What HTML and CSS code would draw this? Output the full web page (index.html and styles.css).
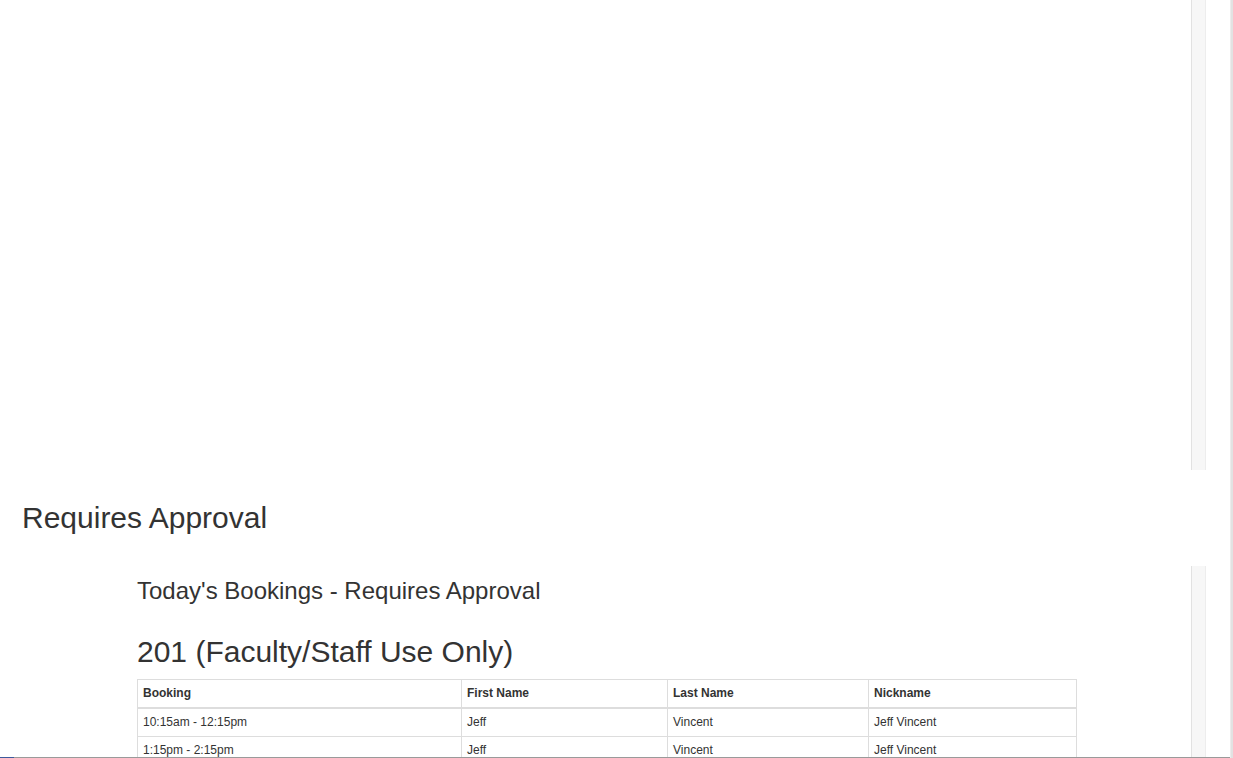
FILE: index.html
```html
<!DOCTYPE html>
<html>
<head>
<meta charset="utf-8">
<link rel="stylesheet" href="styles.css">
</head>
<body>
<div class="page">
  <div class="main">
    <div class="frame frame-top">
      <div class="frame-body"></div>
      <div class="track"></div>
    </div>
    <div class="section-head">
      <h2 class="section-title">Requires Approval</h2>
    </div>
    <div class="frame frame-bottom">
      <div class="frame-body content">
        <h3 class="sub-title">Today's Bookings - Requires Approval</h3>
        <h2 class="room-title">201 (Faculty/Staff Use Only)</h2>
        <table class="bookings">
          <colgroup>
            <col class="c1"><col class="c2"><col class="c3"><col class="c4">
          </colgroup>
          <thead>
            <tr><th>Booking</th><th>First Name</th><th>Last Name</th><th>Nickname</th></tr>
          </thead>
          <tbody>
            <tr><td>10:15am - 12:15pm</td><td>Jeff</td><td>Vincent</td><td>Jeff Vincent</td></tr>
            <tr><td>1:15pm - 2:15pm</td><td>Jeff</td><td>Vincent</td><td>Jeff Vincent</td></tr>
          </tbody>
        </table>
      </div>
      <div class="track"></div>
    </div>
    <div class="status-line"></div>
  </div>
  <div class="rail"></div>
</div>
</body>
</html>
```

FILE: styles.css
```css
html, body {
  margin: 0;
  padding: 0;
  height: 758px;
  overflow: hidden;
  background: #fff;
}
body {
  font-family: "Liberation Sans", Arial, Helvetica, sans-serif;
  color: #333;
}
.page {
  display: flex;
  height: 758px;
}
.main {
  flex: 1;
  display: flex;
  flex-direction: column;
  min-width: 0;
}
.rail {
  width: 3px;
  background: #e2e2e2;
  border-left: 1px solid #ececec;
  box-sizing: border-box;
}
.frame {
  display: flex;
  margin-right: 24px;
}
.frame-top {
  height: 470px;
  flex: none;
}
.frame-bottom {
  flex: 1;
  min-height: 0;
  overflow: hidden;
}
.frame-body {
  flex: 1;
  min-width: 0;
}
.track {
  width: 15px;
  box-sizing: border-box;
  background: #f7f7f7;
  border-left: 1px solid #e2e2e2;
  border-right: 1px solid #ededed;
}
.section-head {
  height: 96px;
  flex: none;
  box-sizing: border-box;
  padding: 31px 0 0 22px;
}
.section-title {
  margin: 0;
  font-size: 30px;
  font-weight: 400;
  line-height: 33px;
}
.content {
  padding: 12px 0 0 137px;
  overflow: hidden;
}
.sub-title {
  margin: 0;
  font-size: 24px;
  font-weight: 400;
  line-height: 26.4px;
}
.room-title {
  margin: 31px 0 0;
  font-size: 30px;
  font-weight: 400;
  line-height: 33px;
}
.bookings {
  margin-top: 11px;
  width: 939px;
  table-layout: fixed;
  border-collapse: collapse;
  font-size: 12px;
  line-height: 17px;
}
.c1 { width: 324px; }
.c2 { width: 206px; }
.c3 { width: 201px; }
.c4 { width: 208px; }
.bookings th,
.bookings td {
  border: 1px solid #ddd;
  padding: 5px;
  text-align: left;
  vertical-align: top;
  white-space: nowrap;
  overflow: hidden;
}
.bookings th {
  font-weight: 700;
  border-bottom-width: 2px;
}
.status-line {
  height: 1px;
  flex: none;
  background: linear-gradient(to right, #3d5a9c 0, #3d5a9c 14px, #9a9a9a 14px, #9a9a9a 100%);
}
```
